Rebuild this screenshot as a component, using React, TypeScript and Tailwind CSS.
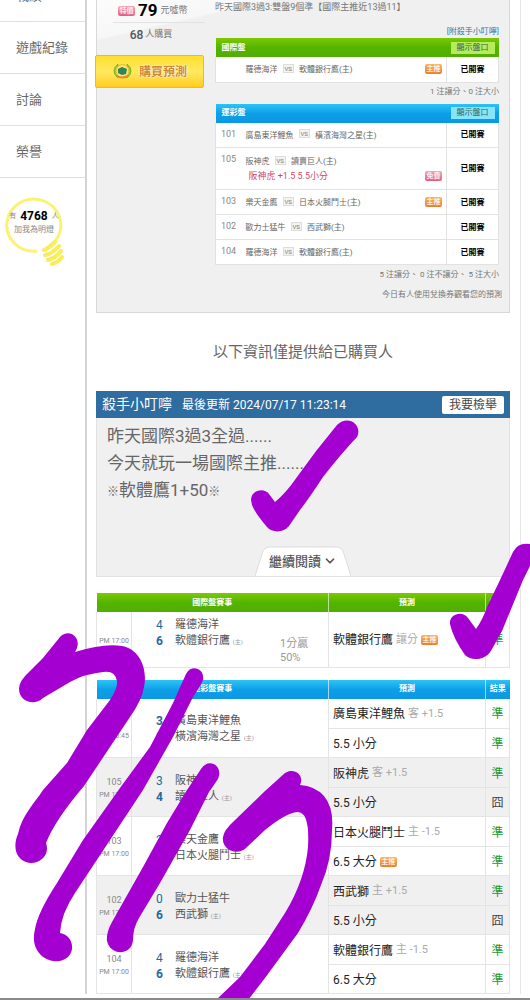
import { ChevronDown } from "lucide-react";

interface Game {
  id: string;
  away: string;
  home: string;
  pick?: string;
  badge?: string;
}

interface Pick {
  team: string;
  line?: string;
  badge?: boolean;
  hit: boolean;
}

interface Result {
  id: string;
  time: string;
  away: string;
  home: string;
  awayScore: number;
  homeScore: number;
  note?: string[];
  picks: Pick[];
}

const navItems = ["戰績", "遊戲紀錄", "討論", "榮譽"];

const intlGames: Game[] = [{ id: "", away: "羅德海洋", home: "軟體銀行鷹", badge: "主推" }];

const lotteryGames: Game[] = [
  { id: "101", away: "廣島東洋鯉魚", home: "橫濱海灣之星" },
  { id: "105", away: "阪神虎", home: "讀賣巨人", pick: "阪神虎 +1.5 5.5小分", badge: "免費" },
  { id: "103", away: "樂天金鷹", home: "日本火腿鬥士", badge: "主推" },
  { id: "102", away: "歐力士猛牛", home: "西武獅" },
  { id: "104", away: "羅德海洋", home: "軟體銀行鷹" },
];

const intlResults: Result[] = [
  {
    id: "",
    time: "PM 17:00",
    away: "羅德海洋",
    home: "軟體銀行鷹",
    awayScore: 4,
    homeScore: 6,
    note: ["1分贏", "50%"],
    picks: [{ team: "軟體銀行鷹", line: "讓分", badge: true, hit: true }],
  },
];

const lotteryResults: Result[] = [
  {
    id: "101",
    time: "PM 16:45",
    away: "廣島東洋鯉魚",
    home: "橫濱海灣之星",
    awayScore: 3,
    homeScore: 2,
    picks: [
      { team: "廣島東洋鯉魚", line: "客 +1.5", hit: true },
      { team: "5.5 小分", hit: true },
    ],
  },
  {
    id: "105",
    time: "PM 17:00",
    away: "阪神虎",
    home: "讀賣巨人",
    awayScore: 3,
    homeScore: 4,
    picks: [
      { team: "阪神虎", line: "客 +1.5", hit: true },
      { team: "5.5 小分", hit: false },
    ],
  },
  {
    id: "103",
    time: "PM 17:00",
    away: "樂天金鷹",
    home: "日本火腿鬥士",
    awayScore: 2,
    homeScore: 7,
    picks: [
      { team: "日本火腿鬥士", line: "主 -1.5", hit: true },
      { team: "6.5 大分", badge: true, hit: true },
    ],
  },
  {
    id: "102",
    time: "PM 17:00",
    away: "歐力士猛牛",
    home: "西武獅",
    awayScore: 0,
    homeScore: 6,
    picks: [
      { team: "西武獅", line: "主 +1.5", hit: true },
      { team: "5.5 小分", hit: false },
    ],
  },
  {
    id: "104",
    time: "PM 17:00",
    away: "羅德海洋",
    home: "軟體銀行鷹",
    awayScore: 4,
    homeScore: 6,
    picks: [
      { team: "軟體銀行鷹", line: "主 -1.5", hit: true },
      { team: "6.5 大分", hit: true },
    ],
  },
];

const greenBar = "bg-linear-to-b from-[#7cc900] via-[#55b400] to-[#4fae00]";
const blueBar = "bg-linear-to-b from-[#2cc4f5] via-[#0c9fe8] to-[#0b98e2]";

function Badge({ text, pink }: { text: string; pink?: boolean }) {
  return (
    <span
      className={`inline-flex h-[10px] w-[17px] shrink-0 items-center justify-center rounded-[2px] text-[7px] leading-none font-bold text-white/85 ${
        pink
          ? "bg-linear-to-b from-[#f4a3b6] to-[#df5f83]"
          : "bg-linear-to-b from-[#f9b463] to-[#e87e2a]"
      }`}
    >
      {text}
    </span>
  );
}

function GameTable({ title, games, green }: { title: string; games: Game[]; green?: boolean }) {
  return (
    <table className="w-full table-fixed border-collapse text-[8px] text-[#666]">
      <colgroup>
        <col className="w-[30px]" />
        <col />
        <col className="w-[52px]" />
      </colgroup>
      <thead>
        <tr className={`h-[19px] text-white ${green ? greenBar : blueBar}`}>
          <th colSpan={2} className="pl-[6px] text-left font-bold">{title}</th>
          <th className="p-0">
            <button
              className={`mx-auto block h-3 w-11 text-[8px] leading-3 font-normal text-[#3f5f55] ${
                green ? "bg-[#b4ec5c]" : "bg-[#84e6fb]"
              }`}
            >
              顯示盤口
            </button>
          </th>
        </tr>
      </thead>
      <tbody className="border-x border-[#e2e2e2]">
        {games.map((g) => (
          <tr
            key={g.away}
            className={`border-b border-[#e2e2e2] bg-white ${g.pick ? "h-[42px]" : "h-[25px]"}`}
          >
            <td className="pt-[5px] pl-[5px] pb-0 align-top text-[9px] leading-3 text-[#888]">{g.id}</td>
            <td className="border-r border-[#e2e2e2] p-0 pt-px pr-1">
              <div className="flex items-end justify-between">
                <div className="leading-[15px]">
                  <div className="flex items-center">
                    {g.away}
                    <span className="mx-[5px] mb-[3px] border border-[#ddd] bg-[#f3f3f3] px-px text-[6px] leading-[7px] text-[#777]">
                      VS
                    </span>
                    {g.home}(主)
                  </div>
                  {g.pick && <div className="pl-[3px] text-[9px] text-[#d0486b]">{g.pick}</div>}
                </div>
                {g.badge && (
                  <span className="mb-[3px] flex">
                    <Badge text={g.badge} pink={g.badge === "免費"} />
                  </span>
                )}
              </div>
            </td>
            <td className="p-0 pt-px text-center font-bold text-black">已開賽</td>
          </tr>
        ))}
      </tbody>
    </table>
  );
}

function ResultTable({ title, results, green }: { title: string; results: Result[]; green?: boolean }) {
  return (
    <table className="w-full table-fixed border-collapse">
      <colgroup>
        <col className="w-[35px]" />
        <col />
        <col className="w-[157px]" />
        <col className="w-6" />
      </colgroup>
      <thead>
        <tr className={`h-[19px] text-[8px] font-bold text-white ${green ? greenBar : blueBar}`}>
          <th colSpan={2} className="border-r border-white/60 p-0">{title}</th>
          <th className="border-r border-white/60 p-0">預測</th>
          <th className="p-0">結果</th>
        </tr>
      </thead>
      <tbody className="border-x border-[#e4e4e4]">
        {results.map((r, row) =>
          r.picks.map((p, i) => (
            <tr
              key={r.id + p.team}
              className={`border-b border-[#e4e4e4] ${row % 2 ? "bg-[#f0f0f0]" : "bg-white"} ${
                r.picks.length === 1 ? "h-[55px]" : i === 0 ? "h-[30px]" : "h-[29px]"
              }`}
            >
              {i === 0 && (
                <>
                  <td
                    rowSpan={r.picks.length}
                    className="border-r border-[#e4e4e4] p-0 pt-1 text-center whitespace-nowrap text-[#888]"
                  >
                    <div className="text-[9px] leading-[13px]">{r.id}</div>
                    <div className="text-[7px] leading-[13px]">{r.time}</div>
                  </td>
                  <td
                    rowSpan={r.picks.length}
                    className={`border-r border-[#e4e4e4] p-0 pl-6 text-[11px] text-[#555] ${
                      r.note ? "pt-[5px] align-top" : "pt-1"
                    }`}
                  >
                    <div className="flex">
                      <div className="w-[19px] text-[12px] leading-4 text-[#1f6a9a]">
                        <div className={r.awayScore > r.homeScore ? "font-bold" : ""}>{r.awayScore}</div>
                        <div className={r.homeScore > r.awayScore ? "font-bold" : ""}>{r.homeScore}</div>
                      </div>
                      <div className="flex-1 leading-4">
                        <div>{r.away}</div>
                        <div>
                          {r.home} <span className="text-[6px] text-[#999]">(主)</span>
                        </div>
                      </div>
                      {r.note && (
                        <div className="w-12 pt-5 leading-[14px] text-[#999]">
                          {r.note.map((n) => (
                            <div key={n}>{n}</div>
                          ))}
                        </div>
                      )}
                    </div>
                  </td>
                </>
              )}
              <td className="border-r border-[#e4e4e4] p-0 pt-0.5 pl-1">
                <div className="flex items-center gap-[3px] text-[12px] text-[#222]">
                  {p.team}
                  {p.line && <span className="text-[11px] text-[#aaa]">{p.line}</span>}
                  {p.badge && <Badge text="主推" />}
                </div>
              </td>
              <td className={`p-0 pt-0.5 text-center text-[12px] ${p.hit ? "text-[#189a35]" : "text-[#444]"}`}>
                {p.hit ? "準" : "囧"}
              </td>
            </tr>
          ))
        )}
      </tbody>
    </table>
  );
}

function Sidebar() {
  return (
    <aside className="w-[87px] shrink-0 border-r-2 border-[#d4d4d4]">
      <nav className="-mt-[30px]">
        {navItems.map((item) => (
          <a
            key={item}
            href="#"
            className="flex h-[52px] items-center border-b border-[#ddd] pl-4 text-[13px] text-[#666]"
          >
            {item}
          </a>
        ))}
      </nav>
      <div className="relative mt-[18px] h-[76px]">
        <svg className="absolute top-0 left-0" width="85" height="76" viewBox="0 0 85 76" fill="none">
          <path d="M37 55A27 26 0 1 1 56 44Q49 50 45 55" stroke="#fbf275" strokeWidth="3" />
          <path
            d="M44 54Q49 52 55 46M45 59Q52 58 59 50M48 64Q56 62 61 55M52 68Q59 66 62 61"
            stroke="#f9ed5a"
            strokeWidth="4"
            strokeLinecap="round"
          />
        </svg>
        <div className="relative w-[68px] pt-3 text-center">
          <p className="flex items-center justify-center gap-1 text-[7px] leading-4 text-[#888]">
            有 <b className="text-[12px] text-black">4768</b> 人
          </p>
          <p className="text-[8px] leading-3 text-[#888]">加我為明燈</p>
        </div>
      </div>
    </aside>
  );
}

function BuyColumn() {
  return (
    <div className="w-[108px] shrink-0">
      <div className="ml-4 flex h-[23px] items-center gap-[3px] border-b border-[#e2e2e2] pl-[5px] text-[9px] text-[#777]">
        <Badge text="特價" pink />
        <b className="text-[17px] text-black">79</b>
        <span>元噓幣</span>
      </div>
      <p className="flex h-6 items-center justify-center gap-[2px] text-[9px] text-[#777]">
        <span className="text-[12px] font-medium text-[#555]">68</span>人購買
      </p>
      <button className="mt-2 -ml-0.5 flex h-[33px] w-[109px] items-center justify-center gap-[6px] rounded-[2px] border border-[#e3bd2c] bg-linear-to-b from-[#ffdf2e] via-[#ffe95e] to-[#ffcd16] text-[12px] font-bold text-[#cf8a35]">
        <svg width="21" height="17" viewBox="0 0 21 17">
          <path d="M6 1Q-2 8 6 15Q3 8 6 1M15 1Q23 8 15 15Q18 8 15 1" fill="#9ccc23" stroke="#7bb51c" />
          <circle cx="10.5" cy="8" r="6.5" fill="#fae27a" stroke="#e9bb33" />
          <path d="M6 6l4-2 5 2-1 5-4 1-4-2z" fill="#2c8754" />
          <path d="M5 13q5 3 11 0" fill="none" stroke="#e98b25" strokeWidth="2" />
        </svg>
        <span className="[text-shadow:0_0_2px_#fff,0_0_1px_#fff]">購買預測</span>
      </button>
    </div>
  );
}

// Hand-drawn 7/17 and the two ticks laid over the page
function Marker() {
  return (
    <svg
      className="pointer-events-none absolute top-0 left-0 h-[1000px] w-[530px]"
      viewBox="0 0 530 1000"
      fill="#a300d1"
    >
      <path d="M251 500C251 490 264 487 269 494L275 502Q286 493 297 477Q316 450 337 425C348 414 363 425 357 437Q340 455 323 477Q310 497 300 510L289 526C284 533 272 533 267 527Q255 513 252 505Z" />
      <path d="M450 624C449 614 462 610 468 618L476 629Q483 619 487 607L500 580L513 552Q518 542 530 544V566L523 580L502 631L492 649C487 660 472 662 465 655Q453 638 450 624Z" />
      <path d="M60 637C69 627 84 638 75 652Q104 643 122 646C139 649 148 668 144 687Q142 700 130 717L110 747L84 786Q55 820 46 843C51 857 36 866 26 862C17 859 12 848 18 834C22 815 34 804 43 790L67 763L87 730L110 700Q118 688 117 681Q115 670 103 672Q84 674 70 682L43 698C34 707 19 701 19 689Q19 681 29 672L43 658Z" />
      <path d="M186 674C191 664 205 668 203 680Q200 687 193 697L173 737L143 790L110 840L75 893Q61 914 60 933C72 935 76 949 68 957C59 965 43 961 37 950Q32 942 35 929Q38 912 57 883L83 840L120 788L150 747L173 703Z" />
      <path d="M201 769C208 757 224 765 218 779L209 792L190 830L160 883L139 918Q133 928 133 940C132 956 110 956 107 941Q106 933 112 922L143 867L167 823L187 790Z" />
      <path d="M285 773C294 767 305 775 300 785Q315 786 324 796Q334 808 332 830Q332 860 321 885Q313 908 298 933L265 978L248 1000H216L240 977L265 944L285 913Q305 880 308 847Q310 811 297 812Q286 813 265 830L247 847C238 857 221 850 223 837Q224 830 234 821L265 791Z" />
    </svg>
  );
}

export default function App() {
  return (
    <div className="relative overflow-hidden border-b-2 border-[#8a8a8a] bg-white pb-1 font-['Roboto','Noto_Sans_CJK_TC',sans-serif]">
      <div className="flex">
        <Sidebar />
        <main className="mr-[9px] min-w-0 flex-1 border-r border-[#e6e6e6] pr-[10px] pl-[9px]">
          <section className="flex border border-t-0 border-[#d8d8d8] bg-[#f0f0f0] bg-[linear-gradient(167deg,#fcfcfc_0,#f7f7f7_38px,#f0f0f0_40px)]">
            <BuyColumn />
            <div className="mx-[10px] min-w-0 flex-1 pb-[7px] text-[8px] text-[#777]">
              <p className="text-[9px] leading-[14px]">昨天國際3過3:雙盤9個準【國際主推近13過11】</p>
              <p className="mt-3 text-right leading-3">
                <a href="#" className="text-[#2878a8]">[附殺手小叮嚀]</a>
              </p>
              <GameTable title="國際盤" games={intlGames} green />
              <p className="mb-[3px] text-right leading-[18px]">1 注讓分、0 注大小</p>
              <GameTable title="運彩盤" games={lotteryGames} />
              <p className="text-right leading-5">5 注讓分、 0 注不讓分、 5 注大小</p>
              <p className="-mr-[3px] text-right leading-5">今日有人使用兌換券觀看您的預測</p>
            </div>
          </section>

          <h2 className="text-center text-[15px] leading-[78px] text-[#666]">以下資訊僅提供給已購買人</h2>

          <section>
            <header className="flex h-[27px] items-center bg-[#2f6c9f] px-[6px] text-white">
              <h3 className="text-[14px]">殺手小叮嚀</h3>
              <time className="ml-[10px] flex-1 text-[12px]">最後更新 2024/07/17 11:23:14</time>
              <button className="h-[18px] rounded-[2px] bg-white px-[7px] text-[12px] leading-[18px] text-[#444]">
                我要檢舉
              </button>
            </header>
            <div className="border border-t-0 border-[#e2e2e2] bg-[#f0f0f0] pt-[5px] text-[17px] leading-[27px] text-[#666]">
              <div className="px-[10px]">
                <p>昨天國際3過3全過......</p>
                <p>今天就玩一場國際主推......</p>
                <p>
                  <span className="text-[12px]">※</span>軟體鷹1+50<span className="text-[12px]">※</span>
                </p>
              </div>
              <button className="relative mx-auto mt-10 flex h-[30px] w-24 items-center justify-center gap-[2px] text-[13px] font-medium text-[#555]">
                <svg className="absolute inset-0" width="96" height="30" viewBox="0 0 96 30">
                  <path d="M0 30L8 5Q10 1 14 1H82Q86 1 88 5L96 30" fill="#fff" stroke="#ddd" />
                </svg>
                <span className="relative">繼續閱讀</span>
                <ChevronDown className="relative size-[14px]" strokeWidth={3} />
              </button>
            </div>
          </section>

          <div className="mt-4 flex flex-col gap-3">
            <ResultTable title="國際盤賽事" results={intlResults} green />
            <ResultTable title="運彩盤賽事" results={lotteryResults} />
          </div>
        </main>
      </div>
      <Marker />
    </div>
  );
}
